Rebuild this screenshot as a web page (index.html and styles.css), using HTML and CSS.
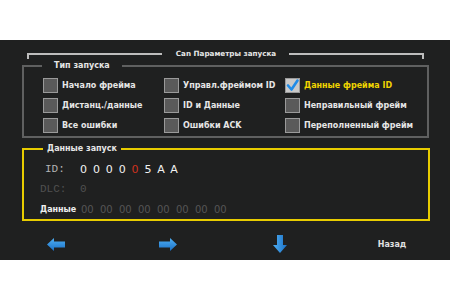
FILE: index.html
```html
<!DOCTYPE html>
<html>
<head>
<meta charset="utf-8">
<link rel="stylesheet" href="styles.css">
</head>
<body>
<div class="panel">
  <div class="header">
    <span class="seg seg-left"></span>
    <span class="title">Can Параметры запуска</span>
    <span class="seg seg-right"></span>
  </div>

  <fieldset class="box types">
    <legend>Тип запуска</legend>
    <div class="grid">
      <label class="opt"><span class="cb"></span>Начало фрейма</label>
      <label class="opt"><span class="cb"></span>Управл.фреймом ID</label>
      <label class="opt on"><span class="cb checked"><svg viewBox="0 0 15 15" width="15" height="15"><path d="M3 7.5 L6.5 11.5 L12.5 2.5" fill="none" stroke="#1e8be8" stroke-width="2.6" stroke-linecap="round" stroke-linejoin="round"/></svg></span>Данные фрейма ID</label>
      <label class="opt"><span class="cb"></span>Дистанц./данные</label>
      <label class="opt"><span class="cb"></span>ID и Данные</label>
      <label class="opt"><span class="cb"></span>Неправильный фрейм</label>
      <label class="opt"><span class="cb"></span>Все ошибки</label>
      <label class="opt"><span class="cb"></span>Ошибки ACK</label>
      <label class="opt"><span class="cb"></span>Переполненный фрейм</label>
    </div>
  </fieldset>

  <fieldset class="box data">
    <legend>Данные запуск</legend>
    <div class="row">
      <span class="key mono id">ID:</span>
      <span class="digits">
        <span>0</span><span>0</span><span>0</span><span>0</span><span class="cur">0</span><span>5</span><span>A</span><span>A</span>
      </span>
    </div>
    <div class="row">
      <span class="key mono dim">DLC:</span>
      <span class="mono dim val">0</span>
    </div>
    <div class="row">
      <span class="key strong">Данные</span>
      <span class="bytes">
        <span>00</span><span>00</span><span>00</span><span>00</span><span>00</span><span>00</span><span>00</span><span>00</span>
      </span>
    </div>
  </fieldset>

  <div class="nav">
    <span class="navitem">
      <svg width="18" height="13" viewBox="0 0 18 13"><defs><linearGradient id="g1" x1="0" y1="0" x2="0" y2="1"><stop offset="0" stop-color="#4fb0f5"/><stop offset="1" stop-color="#1a6fc4"/></linearGradient></defs><path d="M0 6.5 L7 0 L7 3.5 L18 3.5 L18 9.5 L7 9.5 L7 13 Z" fill="url(#g1)"/></svg>
    </span>
    <span class="navitem">
      <svg width="18" height="13" viewBox="0 0 18 13"><defs><linearGradient id="g2" x1="0" y1="0" x2="0" y2="1"><stop offset="0" stop-color="#4fb0f5"/><stop offset="1" stop-color="#1a6fc4"/></linearGradient></defs><path d="M18 6.5 L11 0 L11 3.5 L0 3.5 L0 9.5 L11 9.5 L11 13 Z" fill="url(#g2)"/></svg>
    </span>
    <span class="navitem">
      <svg width="14" height="18" viewBox="0 0 14 18"><defs><linearGradient id="g3" x1="0" y1="0" x2="1" y2="0"><stop offset="0" stop-color="#4fb0f5"/><stop offset="1" stop-color="#1a6fc4"/></linearGradient></defs><path d="M7 18 L0 10 L4 10 L4 0 L10 0 L10 10 L14 10 Z" fill="url(#g3)"/></svg>
    </span>
    <span class="navitem back">Назад</span>
  </div>
</div>
</body>
</html>
```

FILE: styles.css
```css
html, body {
  margin: 0;
  padding: 0;
  background: #ffffff;
}
body {
  font-family: "DejaVu Sans", sans-serif;
}
.panel {
  margin-top: 40px;
  height: 220px;
  background: #1f2020;
  overflow: hidden;
}
.header {
  display: flex;
  align-items: flex-start;
  padding: 8px 26px 0 27px;
  height: 12px;
}
.seg {
  flex: 1;
  height: 4px;
  margin-top: 5px;
  border-top: 2px solid #bdbdbd;
}
.seg-left { border-left: 2px solid #bdbdbd; margin-right: 14px; }
.seg-right { border-right: 2px solid #bdbdbd; margin-left: 13px; }
.title {
  font-size: 7.2px;
  font-weight: bold;
  line-height: 12px;
  color: #e6e6e6;
  white-space: nowrap;
}
.box {
  margin: 0;
  padding: 0 0 0 18px;
  min-width: 0;
}
.box legend {
  padding: 0 12px;
  font-size: 8px;
  font-weight: bold;
  line-height: 10px;
  color: #e6e6e6;
}
.types {
  margin: 1px 21px 0 22px;
  border: 2px solid #5f6060;
  padding-bottom: 1px;
}
.grid {
  display: grid;
  grid-template-columns: 121px 121px 121px;
  grid-auto-rows: 20px;
  padding: 4px 0 0 1px;
}
.opt {
  display: flex;
  align-items: center;
  font-size: 8px;
  font-weight: bold;
  color: #e6e6e6;
  white-space: nowrap;
}
.opt.on { color: #f0d400; }
.cb {
  width: 13px;
  height: 13px;
  border: 1px solid #9a9a9a;
  background: #5a5a5a;
  margin-right: 4px;
  flex: none;
  display: flex;
}
.cb.checked { background: #c9c9c9; }
.cb svg { margin: -1px; }
.data {
  margin: 6px 20px 0 22px;
  border: 2px solid #e8cc00;
  padding: 5px 0 0 16px;
}
.data legend {
  padding: 0 4px;
  margin-left: 3px;
}
.row {
  display: flex;
  align-items: center;
  height: 20px;
}
.key {
  width: 40px;
  flex: none;
}
.mono {
  font-family: "Liberation Mono", monospace;
  font-size: 11px;
}
.id { color: #b4b4b4; padding-left: 5px; width: 35px; }
.dim { color: #505050; }
.strong {
  font-size: 8px;
  font-weight: bold;
  color: #eeeeee;
}
.digits {
  display: flex;
}
.digits span {
  width: 12.9px;
  font-size: 11px;
  color: #f2f2f2;
}
.digits .cur { color: #d0321e; }
.bytes {
  display: flex;
  gap: 7px;
  margin-left: 1px;
}
.bytes span {
  width: 12px;
  font-size: 10px;
  color: #555555;
  white-space: nowrap;
}
.nav {
  display: grid;
  grid-template-columns: repeat(4, 112px);
  height: 20px;
  margin-top: 13px;
}
.navitem {
  display: flex;
  align-items: center;
  justify-content: center;
}
.back {
  font-size: 8px;
  font-weight: bold;
  color: #e0e0e0;
}
```
